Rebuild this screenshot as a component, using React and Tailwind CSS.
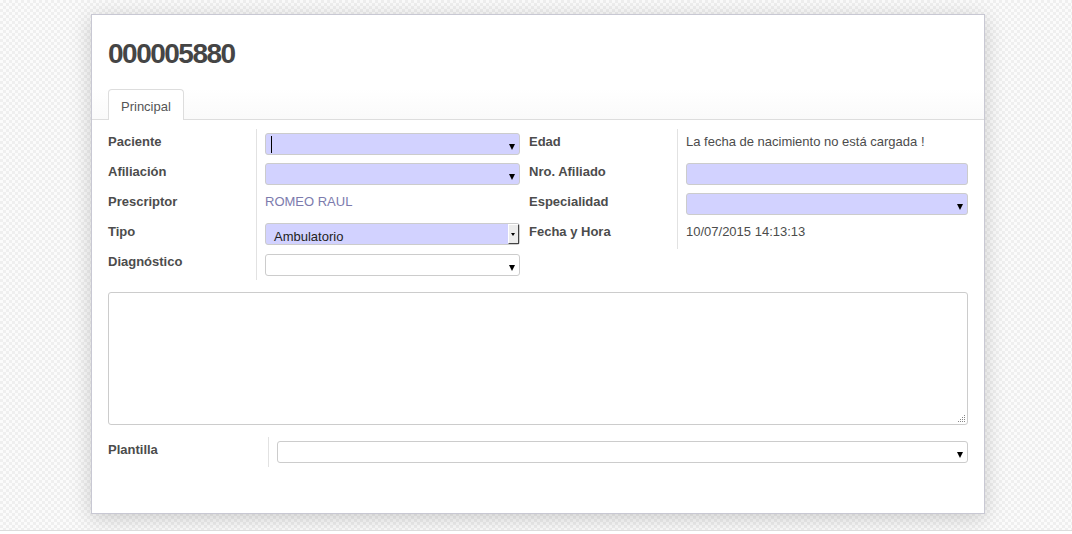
import React from 'react'

function Arrow() {
  return (
    <span className="absolute right-[4px] top-[10px] w-0 h-0 border-x-[3.5px] border-t-[6px] border-x-transparent border-t-black" />
  )
}

function Field({ fill = true, arrow = true, cursor = false, width = 'w-[255px]' }) {
  return (
    <div className={`relative ${width} h-[22px] border border-[#cccccc] rounded-[3px] ${fill ? 'bg-[#d2d2ff]' : 'bg-white'}`}>
      {cursor && <span className="absolute left-[5px] top-[2px] w-px h-[17px] bg-black" />}
      {arrow && <Arrow />}
    </div>
  )
}

function Row({ label, children, last }) {
  return (
    <div className={`flex ${last ? 'h-[31px]' : 'h-[30px]'}`}>
      <div className="w-[148px] pt-[3px] leading-[20px] font-bold">{label}</div>
      <div className={`border-l border-[#e2e2e2] pl-[8px] ${last ? 'pt-[5px]' : 'pt-[4px]'}`}>{children}</div>
    </div>
  )
}

function Value({ children, className = '' }) {
  return <div className={`leading-[20px] -mt-[1px] ${className}`}>{children}</div>
}

export default function App() {
  return (
    <div className="w-[1072px] h-[534px] flex flex-col bg-[repeating-conic-gradient(#efefef_0_25%,#fbfbfb_0_50%)] bg-size-[6px_6px] font-['Liberation_Sans',Arial,sans-serif] text-[13px] text-[#4c4c4c]">
      <div className="h-[530px] pt-[14px] pl-[91px]">
        <div className="w-[894px] h-[500px] bg-white border border-[#c8c8d3] shadow-[0_4px_20px_rgba(0,0,0,0.18)]">
          <h1 className="mt-[24px] px-4 text-[28px] tracking-[-1.5px] leading-[30px] font-bold text-[#454545]">000005880</h1>

          <div className="mt-[20px] px-4 h-[31px] border-b border-[#dddddd] bg-gradient-to-b from-white to-[#fafafa]">
            <div className="inline-block h-[31px] px-[12px] pt-[7px] leading-[20px] border border-b-0 border-[#dddddd] rounded-t-[4px] bg-white text-[#555555]">
              Principal
            </div>
          </div>

          <div className="px-4 pt-[9px]">
            <div className="flex gap-[9px]">
              <div className="w-[412px]">
                <Row label="Paciente"><Field cursor /></Row>
                <Row label="Afiliación"><Field /></Row>
                <Row label="Prescriptor"><Value className="text-[#7c7bad]">ROMEO RAUL</Value></Row>
                <Row label="Tipo">
                  <div className="relative w-[255px] h-[22px] border border-[#cccccc] rounded-[3px] bg-[#d2d2ff]">
                    <span className="absolute left-[8px] top-[3px] leading-[20px] text-[#222222]">Ambulatorio</span>
                    <span className="absolute right-0 top-0 w-[11px] h-[20px] bg-[#ececec] border-t border-l border-white border-r border-b border-r-[#444444] border-b-[#444444]">
                      <span className="absolute left-[2px] top-[8px] w-0 h-0 border-x-[2.5px] border-t-[3px] border-x-transparent border-t-black" />
                    </span>
                  </div>
                </Row>
                <Row label="Diagnóstico" last><Field fill={false} /></Row>
              </div>
              <div className="w-[439px]">
                <Row label="Edad"><Value>La fecha de nacimiento no está cargada !</Value></Row>
                <Row label="Nro. Afiliado"><Field arrow={false} width="w-[282px]" /></Row>
                <Row label="Especialidad"><Field width="w-[282px]" /></Row>
                <Row label="Fecha y Hora"><Value>10/07/2015 14:13:13</Value></Row>
              </div>
            </div>

            <div className="relative mt-[12px] h-[133px] border border-[#cccccc] rounded-[3px] bg-white">
              <svg className="absolute right-[1px] bottom-[1px]" width="9" height="9" viewBox="0 0 9 9">
                <g fill="#888888">
                  <rect x="7" y="1" width="1" height="1" />
                  <rect x="7" y="3" width="1" height="1" />
                  <rect x="5" y="3" width="1" height="1" />
                  <rect x="7" y="5" width="1" height="1" />
                  <rect x="5" y="5" width="1" height="1" />
                  <rect x="3" y="5" width="1" height="1" />
                  <rect x="7" y="7" width="1" height="1" />
                  <rect x="5" y="7" width="1" height="1" />
                  <rect x="3" y="7" width="1" height="1" />
                  <rect x="1" y="7" width="1" height="1" />
                </g>
              </svg>
            </div>

            <div className="mt-[12px] flex h-[30px]">
              <div className="w-[160px] pt-[3px] leading-[20px] font-bold">Plantilla</div>
              <div className="flex-1 border-l border-[#e2e2e2] pl-[8px] pt-[4px]">
                <Field fill={false} width="w-full" />
              </div>
            </div>
          </div>
        </div>
      </div>
      <div className="flex-1 border-t border-[#dcdcdc] bg-white" />
    </div>
  )
}
